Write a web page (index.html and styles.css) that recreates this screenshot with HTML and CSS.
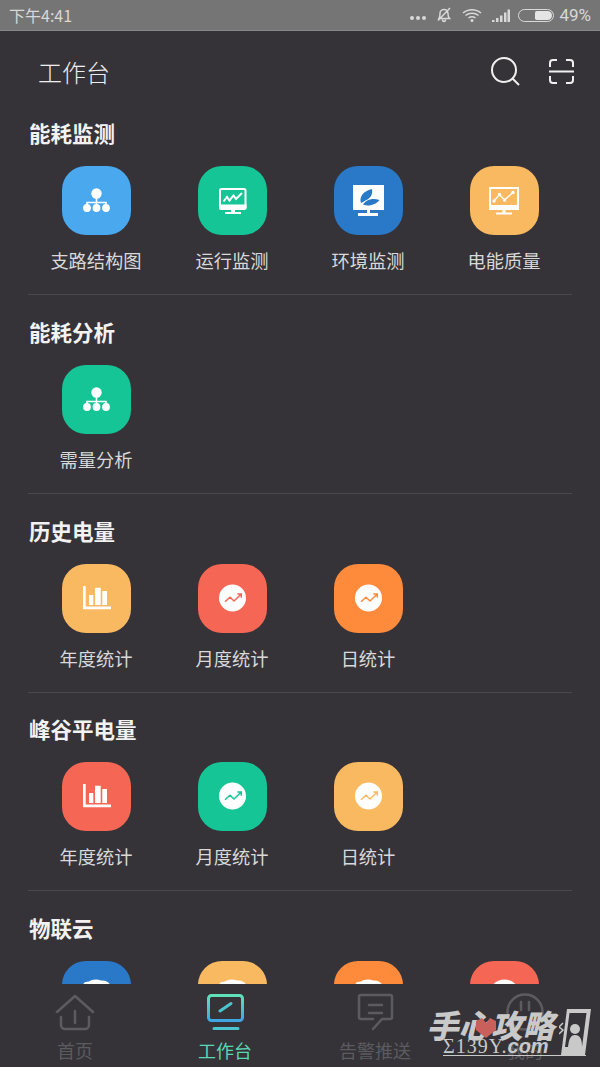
FILE: index.html
```html
<!DOCTYPE html>
<html lang="zh-CN">
<head>
<meta charset="UTF-8">
<meta name="viewport" content="width=device-width, initial-scale=1.0">
<title>工作台</title>
<link rel="stylesheet" href="styles.css">
</head>
<body>

<svg class="defs" width="0" height="0">
    <defs>
        <linearGradient id="tab-grad" x1="0" y1="0" x2="0" y2="1">
            <stop offset="0" stop-color="#5fe2b9"/>
            <stop offset="1" stop-color="#3fa6e2"/>
        </linearGradient>
        <symbol id="i-org" viewBox="0 0 69 69">
            <path d="M34.5 30V37M25 42V36.5H44V42M34.5 36.5V42" fill="none" stroke="#fff" stroke-width="1.6"/>
            <circle cx="34.5" cy="27.5" r="5.2" fill="#fff"/>
            <circle cx="25" cy="42" r="3.9" fill="#fff"/>
            <circle cx="34.5" cy="42" r="3.9" fill="#fff"/>
            <circle cx="44" cy="42" r="3.9" fill="#fff"/>
        </symbol>
        <symbol id="i-monitor" viewBox="0 0 69 69">
            <path d="M22 24.5a1.5 1.5 0 0 1 1.500-1.500H46a1.500 1.500 0 0 1 1.500 1.500V41.500H22Z" fill="none" stroke="#fff" stroke-width="2"/>
            <path d="M21 38.500H48.500V42a2 2 0 0 1-2 2H23a2 2 0 0 1-2-2Z" fill="#fff"/>
            <path d="M33 43H37V46H33ZM27 46H43V48H27Z" fill="#fff"/>
            <path d="M25.500 35.500L29 31L31.500 34.500L35.500 29.500L38 33L44 27" fill="none" stroke="#fff" stroke-width="2"/>
        </symbol>
        <symbol id="i-leaf" viewBox="0 0 69 69">
            <path d="M19 19H50V44H19ZM33 44H36V47H33ZM24 47H44V50H24Z" fill="#fff"/>
            <path d="M27 37C25 31 29 25 38 23C39 29 36 32 33.500 33.500C31.500 34.500 29 36 27 37Z" fill="currentColor"/>
            <path d="M29 38.500C32 34 38 31.500 45.500 34C42 38.500 35 41 29 38.500Z" fill="currentColor"/>
        </symbol>
        <symbol id="i-quality" viewBox="0 0 69 69">
            <path d="M20 22H48V43H20Z" fill="none" stroke="#fff" stroke-width="2"/>
            <path d="M19 39H49V44H19ZM32.500 44H35.500V47H32.500ZM26 46.500H42V48.500H26Z" fill="#fff"/>
            <path d="M24 35L29.500 28.500L34.500 34L43 26.500" fill="none" stroke="#fff" stroke-width="1.400"/>
            <circle cx="24" cy="35" r="1.700" fill="#fff"/>
            <circle cx="29.500" cy="28.500" r="1.700" fill="#fff"/>
            <circle cx="34.500" cy="34" r="1.700" fill="#fff"/>
            <circle cx="43" cy="26.500" r="1.700" fill="#fff"/>
        </symbol>
        <symbol id="i-bars" viewBox="0 0 69 69">
            <path d="M21 22H23.700V42.600H49V45.300H21ZM27 31H31.300V41H27ZM33 23.700H38.700V41H33ZM40.300 27H45V41H40.300Z" fill="#fff"/>
        </symbol>
        <symbol id="i-trend" viewBox="0 0 69 69">
            <circle cx="34.500" cy="34" r="13.500" fill="#fff"/>
            <path d="M27 37.700L32 33.300L36 37L43 30.300M39.300 30H43.300V33.700" fill="none" stroke="currentColor" stroke-width="1.500"/>
        </symbol>
        <symbol id="i-cloud" viewBox="0 0 69 69">
            <path d="M21 24C21.500 21.500 24 20.500 27 20.500C29 18.500 35 17.500 39 19.500C43 19 47 20.500 48 24Z" fill="#fff"/>
        </symbol>
        <symbol id="i-ball" viewBox="0 0 69 69">
            <circle cx="34.500" cy="34" r="15.500" fill="#fff"/>
        </symbol>
    </defs>
</svg>

<div class="status">
    <span class="status-time">下午4:41</span>
    <div class="status-right">
        <svg class="st-dots" width="16" height="6" viewBox="0 0 16 6"><circle cx="2" cy="3" r="2"/><circle cx="8" cy="3" r="2"/><circle cx="14" cy="3" r="2"/></svg>
        <svg class="st-line" width="18" height="16" viewBox="0 0 18 16"><path d="M4 11.500C5 10 5 8 5 6.500C5 4 7 2.500 9 2.500C11 2.500 13 4 13 6.500C13 8 13 10 14.500 11.500ZM7.500 12.500C7.500 15 10.500 15 10.500 12.500M15 1L3 13.500"/></svg>
        <svg class="st-line" width="20" height="15" viewBox="0 0 20 15"><path d="M1 5C6 0.500 14 0.500 19 5M3.500 7.500C7 4.500 13 4.500 16.500 7.500M6.500 10C8.500 8.500 11.500 8.500 13.500 10"/><circle class="st-fill" cx="10" cy="12.500" r="1.500"/></svg>
        <svg class="st-signal" width="18" height="13" viewBox="0 0 18 13"><path d="M0 11H2.500V13H0ZM4 9H6.500V13H4ZM8 6.500H10.500V13H8ZM12 3.500H14.500V13H12ZM15.500 0.500H18V13H15.500Z"/></svg>
        <div class="battery"><span class="battery-level"></span></div>
        <span class="status-pct">49%</span>
    </div>
</div>

<header class="topbar">
    <h1 class="page-title">工作台</h1>
    <div class="top-actions">
        <svg width="29" height="29" viewBox="0 0 29 29" class="top-icon"><circle cx="13" cy="13" r="12"/><path d="M21.500 21.500L28 28"/></svg>
        <svg width="25" height="25" viewBox="0 0 25 25" class="top-icon"><path d="M1 8V4a3 3 0 0 1 3-3H8M17 1H21a3 3 0 0 1 3 3V8M0 12.500H25M1 17V21a3 3 0 0 0 3 3H8M17 24H21a3 3 0 0 0 3-3V17"/></svg>
    </div>
</header>

<main class="content">
    <section class="group">
        <h2 class="group-title">能耗监测</h2>
        <div class="grid">
            <div class="item"><div class="tile blue"><svg><use href="#i-org"/></svg></div><span>支路结构图</span></div>
            <div class="item"><div class="tile green"><svg><use href="#i-monitor"/></svg></div><span>运行监测</span></div>
            <div class="item"><div class="tile navy"><svg><use href="#i-leaf"/></svg></div><span>环境监测</span></div>
            <div class="item"><div class="tile yellow"><svg><use href="#i-quality"/></svg></div><span>电能质量</span></div>
        </div>
    </section>
    <section class="group">
        <h2 class="group-title">能耗分析</h2>
        <div class="grid">
            <div class="item"><div class="tile green"><svg><use href="#i-org"/></svg></div><span>需量分析</span></div>
        </div>
    </section>
    <section class="group">
        <h2 class="group-title">历史电量</h2>
        <div class="grid">
            <div class="item"><div class="tile yellow"><svg><use href="#i-bars"/></svg></div><span>年度统计</span></div>
            <div class="item"><div class="tile red"><svg><use href="#i-trend"/></svg></div><span>月度统计</span></div>
            <div class="item"><div class="tile orange"><svg><use href="#i-trend"/></svg></div><span>日统计</span></div>
        </div>
    </section>
    <section class="group">
        <h2 class="group-title">峰谷平电量</h2>
        <div class="grid">
            <div class="item"><div class="tile red"><svg><use href="#i-bars"/></svg></div><span>年度统计</span></div>
            <div class="item"><div class="tile green"><svg><use href="#i-trend"/></svg></div><span>月度统计</span></div>
            <div class="item"><div class="tile yellow"><svg><use href="#i-trend"/></svg></div><span>日统计</span></div>
        </div>
    </section>
    <section class="group">
        <h2 class="group-title">物联云</h2>
        <div class="grid">
            <div class="item"><div class="tile navy"><svg><use href="#i-cloud"/></svg></div></div>
            <div class="item"><div class="tile yellow"><svg><use href="#i-cloud"/></svg></div></div>
            <div class="item"><div class="tile orange"><svg><use href="#i-cloud"/></svg></div></div>
            <div class="item"><div class="tile red"><svg><use href="#i-ball"/></svg></div></div>
        </div>
    </section>
</main>

<nav class="tabbar">
    <div class="tab">
        <svg class="tab-icon" viewBox="0 0 40 40"><path d="M2 20L20 4L38 20M6 25V33a4 4 0 0 0 4 4H30a4 4 0 0 0 4-4V25M20 19V31"/></svg>
        <span>首页</span>
    </div>
    <div class="tab tab-active">
        <svg class="tab-icon" viewBox="0 0 40 40"><rect x="3.500" y="3.500" width="34" height="25" rx="3"/><path d="M15 19L26 11.500M9 36.500H33"/></svg>
        <span>工作台</span>
    </div>
    <div class="tab">
        <svg class="tab-icon" viewBox="0 0 40 40"><path d="M18 27H6a2 2 0 0 1-2-2V5a2 2 0 0 1 2-2H35a2 2 0 0 1 2 2V25a2 2 0 0 1-2 2H27L18 37M14 13H27M14 21H27"/></svg>
        <span>告警推送</span>
    </div>
    <div class="tab">
        <svg class="tab-icon" viewBox="0 0 40 40"><circle cx="20" cy="20" r="17.500"/><path d="M16 10V18M24 10V18"/></svg>
        <span>我的</span>
    </div>
</nav>

<div class="watermark">
    <div class="wm-title">手心攻略</div>
    <svg class="wm-heart" width="20" height="20" viewBox="0 0 20 20"><path d="M0 3L6 0L10 5L14 0L20 3V12L10 20L0 12Z"/></svg>
    <div class="wm-url"><span class="wm-site">Σ139Y.</span><span class="wm-com">com</span></div>
    <svg class="wm-phone" width="32" height="46" viewBox="0 0 32 46"><path fill-rule="evenodd" d="M8 0H32L26 46H2ZM10.500 4L6 38H23L27.500 4Z"/><circle cx="16" cy="20" r="5"/><path d="M9 38C10 29 12 26 16 26C21 26 23 30 23 38Z"/><path d="M4 14L0 18L4 21L0 25" fill="none" stroke="#c9c9c9" stroke-width="1.500"/></svg>
</div>

</body>
</html>
```

FILE: styles.css
```css
* {
    box-sizing: border-box;
}
html, body {
    margin: 0;
    padding: 0;
}
body {
    position: relative;
    width: 600px;
    height: 1067px;
    overflow: hidden;
    display: flex;
    flex-direction: column;
    background: #353338;
    font-family: "Noto Sans CJK SC", Roboto, sans-serif;
    color: #d9d9d9;
}
.defs {
    position: absolute;
}

/* status bar */
.status {
    flex: none;
    height: 31px;
    display: flex;
    align-items: center;
    justify-content: space-between;
    padding: 0 9px;
    background: #757575;
    border-bottom: 1px solid #87878a;
    color: #d8d8d8;
    font-size: 16px;
}
.status-right {
    display: flex;
    align-items: center;
}
.st-dots {
    fill: #d8d8d8;
    margin: 5px 9px 0 0;
}
.st-line {
    fill: none;
    stroke: #d8d8d8;
    stroke-width: 1.500;
    margin-right: 9px;
}
.st-fill {
    fill: #d8d8d8;
    stroke: none;
}
.st-signal {
    fill: #d8d8d8;
    margin: 0 8px 0 1px;
}
.battery {
    width: 36px;
    height: 13px;
    border: 1px solid #d8d8d8;
    border-radius: 7px;
    padding: 1px;
    display: flex;
    justify-content: flex-end;
    margin-right: 5px;
}
.battery-level {
    width: 17px;
    background: #e4e4e4;
    border-radius: 2px 5px 5px 2px;
}
.status-pct {
    font-family: Roboto, sans-serif;
    font-size: 17px;
}

/* top bar */
.topbar {
    flex: none;
    height: 85px;
    display: flex;
    align-items: center;
    justify-content: space-between;
    padding: 0 26px 5px 38px;
}
.page-title {
    margin: 0;
    font-size: 24px;
    font-weight: 300;
    color: #eeeeee;
}
.top-actions {
    display: flex;
    align-items: center;
    gap: 29px;
}
.top-icon {
    fill: none;
    stroke: #f0f0f0;
    stroke-width: 2;
}

/* sections */
.content {
    flex: 1;
    min-height: 0;
    overflow: hidden;
    padding: 0 28px;
}
.group {
    height: 179px;
    margin-bottom: 19.750px;
    border-bottom: 1px solid #49484c;
}
.group-title {
    margin: 0;
    padding-left: 1px;
    height: 34px;
    line-height: 34px;
    font-size: 21.500px;
    font-weight: 700;
    color: #f2f2f2;
}
.grid {
    display: grid;
    grid-template-columns: repeat(4, 136px);
    margin-top: 16px;
}
.item {
    display: flex;
    flex-direction: column;
    align-items: center;
    font-size: 18.250px;
    line-height: 26px;
    white-space: nowrap;
}
.item span {
    margin-top: 12px;
}
.tile {
    width: 69px;
    height: 69px;
    border-radius: 24px;
}
.tile svg {
    display: block;
    width: 69px;
    height: 69px;
}
.blue { background: #4aa8ee; color: #4aa8ee; }
.green { background: #16c596; color: #16c596; }
.navy { background: #2a79c9; color: #2a79c9; }
.yellow { background: #f9b961; color: #f9b961; }
.red { background: #f56655; color: #f56655; }
.orange { background: #fe8a3c; color: #fe8a3c; }

/* bottom tabs */
.tabbar {
    flex: none;
    height: 83px;
    display: grid;
    grid-template-columns: repeat(4, 150px);
    background: #353338;
}
.tab {
    display: flex;
    flex-direction: column;
    align-items: center;
    padding-top: 8px;
    font-size: 18px;
    line-height: 26px;
    color: #5c5b5f;
}
.tab-icon {
    width: 40px;
    height: 40px;
    margin-bottom: 5px;
    fill: none;
    stroke: #5c5b5f;
    stroke-width: 2.500;
    stroke-linecap: round;
    stroke-linejoin: round;
}
.tab-active {
    color: #58d8b4;
}
.tab-active .tab-icon {
    stroke: url(#tab-grad);
    stroke-width: 3;
}
.tab-active .tab-icon path:last-child {
    stroke: #4cc4cf;
}

/* watermark over the tab bar */
.watermark {
    position: absolute;
    left: 428px;
    top: 1002px;
    width: 165px;
    height: 60px;
    color: #c9c9c9;
}
.wm-title {
    position: absolute;
    left: 2px;
    top: 2px;
    font-size: 32px;
    line-height: 40px;
    font-weight: 900;
    white-space: nowrap;
    transform: skewX(-14deg);
}
.wm-heart {
    position: absolute;
    left: 48px;
    top: 16px;
    fill: #c9605c;
}
.wm-url {
    position: absolute;
    left: 15px;
    bottom: 6px;
    width: 143px;
    line-height: 17px;
    border-bottom: 1px solid #c9c9c9;
    white-space: nowrap;
}
.wm-site {
    font-family: "Liberation Serif", serif;
    font-size: 20px;
    letter-spacing: 1px;
}
.wm-com {
    font-family: "Liberation Sans", sans-serif;
    font-size: 20px;
    font-weight: 700;
    font-style: italic;
}
.wm-phone {
    position: absolute;
    left: 131px;
    top: 7px;
    fill: #c9c9c9;
}
```
